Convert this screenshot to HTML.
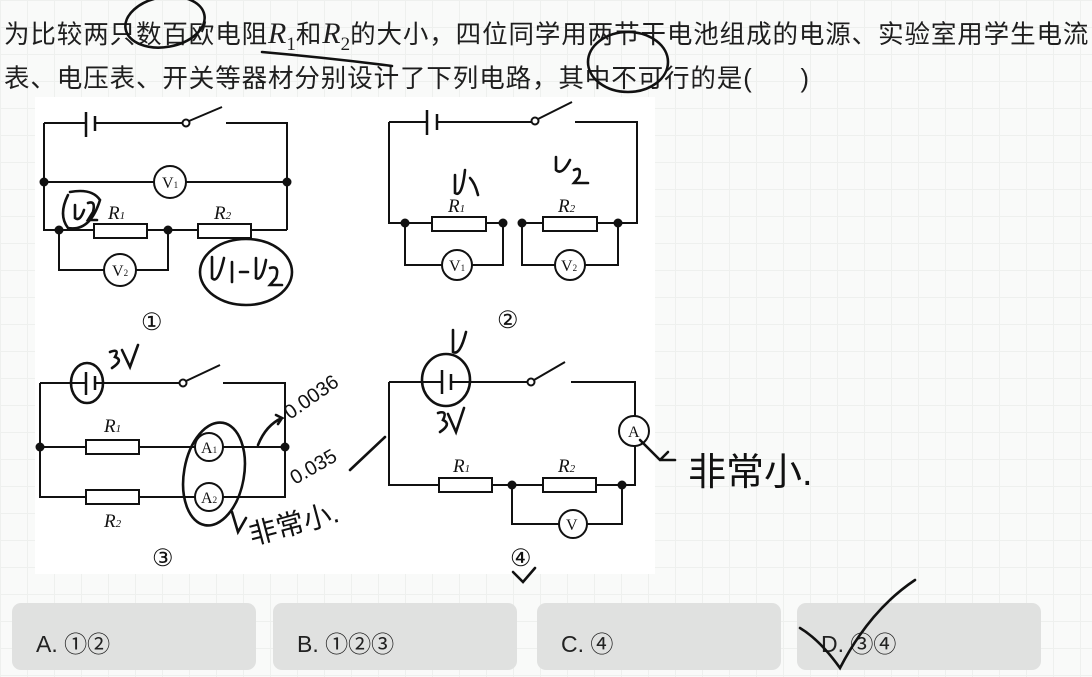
<!DOCTYPE html>
<html><head><meta charset="utf-8"><style>
html,body{margin:0;padding:0;}
body{width:1092px;height:677px;position:relative;overflow:hidden;font-family:"Liberation Sans","Noto Sans CJK SC",sans-serif;
background-color:#f9faf9;
background-image:linear-gradient(#eef0ee 1px,transparent 1px),linear-gradient(90deg,#eef0ee 1px,transparent 1px);
background-size:27px 27px;}
.q{position:absolute;left:4px;font-size:25.5px;color:#1e1e1e;white-space:nowrap;letter-spacing:0.9px}
.r{font-family:"Liberation Serif",serif;font-style:italic;font-size:30px;letter-spacing:0}
.r sub{font-style:normal;font-size:19px}
.btn{position:absolute;top:603px;height:67px;width:244px;background:#e0e1e0;border-radius:9px;font-size:23px;color:#222}
.btn span{position:absolute;left:24px;top:22px}
svg{position:absolute;left:0;top:0}
</style></head><body>
<div class="q" style="top:14px">为比较两只数百欧电阻<span class="r">R<sub>1</sub></span>和<span class="r">R<sub>2</sub></span>的大小，四位同学用两节干电池组成的电源、实验室用学生电流</div>
<div class="q" style="top:58px">表、电压表、开关等器材分别设计了下列电路，其中不可行的是(&nbsp;&nbsp;&nbsp;&nbsp;&nbsp;&nbsp;)</div>

<div class="btn" style="left:12px"><span>A. ①②</span></div>
<div class="btn" style="left:273px"><span>B. ①②③</span></div>
<div class="btn" style="left:537px"><span>C. ④</span></div>
<div class="btn" style="left:797px"><span>D. ③④</span></div>

<svg width="1092" height="677" viewBox="0 0 1092 677" font-family="Liberation Serif,serif">
<rect x="35" y="97" width="620" height="477" fill="#fff"/>
<g stroke="#111" stroke-width="2" fill="none">
<path d="M44 123H86M95 123H183M226 123H287V230M44 123V230H94M147 230H198M251 230H287M44 182H154M186 182H287M59 230V270H104M136 270H168V230"/>
<path d="M86 112V137M95 116V131" stroke-width="2.5"/>
<path d="M189 121L222 107"/>
<circle cx="186" cy="123" r="3.5" fill="#fff"/>
<circle cx="170" cy="182" r="16"/><circle cx="120" cy="270" r="16"/>
<rect x="94" y="224" width="53" height="14" fill="#fff"/><rect x="198" y="224" width="53" height="14" fill="#fff"/>
<path d="M389 122H427M437 122H531M575 122H637V223H618M389 122V223H432M486 223H503M522 223H543M597 223H618M405 223V265H442M472 265H503V223M522 223V265H555M585 265H618V223"/>
<path d="M427 110V135M437 114V130" stroke-width="2.5"/>
<path d="M538 119L572 102"/><circle cx="535" cy="121" r="3.5" fill="#fff"/>
<circle cx="457" cy="265" r="15"/><circle cx="570" cy="265" r="15"/>
<rect x="432" y="217" width="54" height="14" fill="#fff"/><rect x="543" y="217" width="54" height="14" fill="#fff"/>
<path d="M40 383H86M95 383H180M223 383H285V497H223M40 383V497H86M139 497H195M40 447H86M139 447H195M223 447H285"/>
<path d="M86 372V395M95 376V390" stroke-width="2.5"/>
<path d="M186 381L220 365"/><circle cx="183" cy="383" r="3.5" fill="#fff"/>
<circle cx="209" cy="447" r="14"/><circle cx="209" cy="497" r="14"/>
<rect x="86" y="440" width="53" height="14" fill="#fff"/><rect x="86" y="490" width="53" height="14" fill="#fff"/>
<path d="M389 382H442M451 382H528M571 382H635V416M635 446V485H622M389 382V485H439M492 485H543M596 485H622M512 485V524H559M587 524H622V485"/>
<path d="M442 370V394M451 374V390" stroke-width="2.5"/>
<path d="M534 380L565 362"/><circle cx="531" cy="382" r="3.5" fill="#fff"/>
<circle cx="634" cy="431" r="15"/><circle cx="573" cy="524" r="14"/>
<rect x="439" y="478" width="53" height="14" fill="#fff"/><rect x="543" y="478" width="53" height="14" fill="#fff"/>
</g>
<g fill="#111">
<circle cx="44" cy="182" r="4.5"/><circle cx="287" cy="182" r="4.5"/><circle cx="59" cy="230" r="4.5"/><circle cx="168" cy="230" r="4.5"/>
<circle cx="405" cy="223" r="4.5"/><circle cx="503" cy="223" r="4.5"/><circle cx="522" cy="223" r="4.5"/><circle cx="618" cy="223" r="4.5"/>
<circle cx="40" cy="447" r="4.5"/><circle cx="285" cy="447" r="4.5"/>
<circle cx="512" cy="485" r="4.5"/><circle cx="622" cy="485" r="4.5"/>
</g>
<g fill="#111" font-size="16">
<text x="162" y="188">V<tspan font-size="9">1</tspan></text>
<text x="112" y="276">V<tspan font-size="9">2</tspan></text>
<text x="108" y="219" font-style="italic" font-size="19">R<tspan font-size="11">1</tspan></text>
<text x="214" y="219" font-style="italic" font-size="19">R<tspan font-size="11">2</tspan></text>
<text x="141" y="330" font-size="24">①</text>
<text x="449" y="271">V<tspan font-size="9">1</tspan></text>
<text x="561" y="271">V<tspan font-size="9">2</tspan></text>
<text x="448" y="212" font-style="italic" font-size="19">R<tspan font-size="11">1</tspan></text>
<text x="558" y="212" font-style="italic" font-size="19">R<tspan font-size="11">2</tspan></text>
<text x="497" y="328" font-size="24">②</text>
<text x="201" y="453">A<tspan font-size="9">1</tspan></text>
<text x="201" y="503">A<tspan font-size="9">2</tspan></text>
<text x="104" y="432" font-style="italic" font-size="19">R<tspan font-size="11">1</tspan></text>
<text x="104" y="527" font-style="italic" font-size="19">R<tspan font-size="11">2</tspan></text>
<text x="152" y="566" font-size="24">③</text>
<text x="628" y="437">A</text>
<text x="566" y="530">V</text>
<text x="453" y="472" font-style="italic" font-size="19">R<tspan font-size="11">1</tspan></text>
<text x="558" y="472" font-style="italic" font-size="19">R<tspan font-size="11">2</tspan></text>
<text x="510" y="566" font-size="24">④</text>
</g>
<g fill="#111" font-family="Liberation Sans,Noto Sans CJK SC,sans-serif">
<text x="290" y="420" font-size="20" transform="rotate(-35 290 420)">0.0036</text>
<text x="295" y="485" font-size="20" transform="rotate(-30 295 485)">0.035</text>
<text x="252" y="545" font-size="28" transform="rotate(-15 252 545)">非常小.</text>
<text x="688" y="485" font-size="38">非常小.</text>
</g>
<g stroke="#111" stroke-width="2.6" fill="none" stroke-linecap="round">
<ellipse cx="165" cy="22" rx="40" ry="25" transform="rotate(-10 165 22)"/>
<path d="M262 52Q330 58 392 66"/>
<ellipse cx="628" cy="62" rx="40" ry="30"/>
<path d="M68 195Q58 215 68 228Q90 232 100 200Q92 188 70 192"/>
<path d="M75 205V218Q80 222 84 210M88 203Q96 200 93 212L88 220H97"/>
<ellipse cx="246" cy="272" rx="46" ry="33"/>
<path d="M212 257V278Q218 285 224 258M232 262V282M240 272H248M256 258V278Q262 282 266 260M270 268Q280 265 276 278L270 285H282"/>
<path d="M455 175V193Q462 198 465 170M470 178Q475 183 478 195"/>
<path d="M556 157V170Q562 176 570 160M574 170Q582 166 579 177L574 183H588"/>
<ellipse cx="87" cy="383" rx="16" ry="20"/>
<path d="M110 352Q120 348 115 357Q124 360 112 368M122 350L130 367L138 345"/>
<ellipse cx="446" cy="380" rx="24" ry="26"/>
<path d="M453 330V352Q460 356 466 332"/>
<path d="M438 413Q448 410 443 420Q452 424 440 432M448 414L456 432L464 408"/>
<ellipse cx="214" cy="474" rx="30" ry="52" transform="rotate(10 214 474)"/>
<path d="M258 445Q266 425 282 418L276 415M282 418L278 424"/>
<path d="M350 470L385 437"/>
<path d="M232 512L238 532L246 518"/>
<path d="M640 440L660 460H675M660 460L668 452"/>
<path d="M513 572L523 582L535 568"/>
<path d="M800 628Q820 640 840 668Q870 610 915 580"/>
</g>
</svg>
</body></html>
